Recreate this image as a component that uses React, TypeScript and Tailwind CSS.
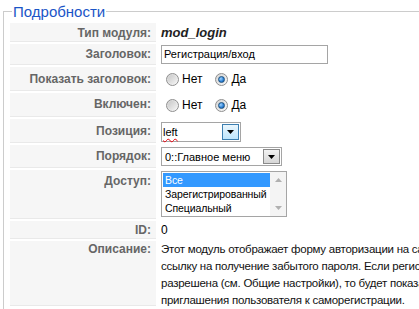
import React from "react";

function Radio({ checked }: { checked?: boolean }) {
  return (
    <span className="inline-flex h-[13px] w-[13px] items-center justify-center rounded-full border border-[#8f8f8f] bg-[linear-gradient(135deg,#d4d4d4,#f8f8f8)]">
      {checked ? (
        <span className="h-[7px] w-[7px] rounded-full border border-[#1c5180] bg-[radial-gradient(circle_at_35%_35%,#9fd3ff,#2a7fd4_60%,#0d4c91)]" />
      ) : (
        <span className="h-[9px] w-[9px] rounded-full bg-[linear-gradient(135deg,#c8c8c8,#f4f4f4)]" />
      )}
    </span>
  );
}

function Arrow() {
  return (
    <svg width="7" height="4" viewBox="0 0 7 4">
      <path d="M0 0h7L3.5 4z" fill="#000" />
    </svg>
  );
}

function Row({
  h,
  lpt,
  vpt,
  name,
  children,
}: {
  h: string;
  lpt: string;
  vpt: string;
  name: string;
  children: React.ReactNode;
}) {
  return (
    <tr>
      <td className="p-0 align-top">
        <div
          className={`${h} ${lpt} w-[146px] bg-[#f6f6f6] border-b border-[#e9e9e9] text-right pr-[5px] font-bold text-[#666] leading-[14px]`}
        >
          {name}
        </div>
      </td>
      <td className="p-0 align-top">
        <div className={`${h} ${vpt} pl-[4px] text-black leading-[14px]`}>{children}</div>
      </td>
    </tr>
  );
}

function RadioPair() {
  return (
    <div className="flex items-center pl-[5px]">
      <Radio />
      <span className="ml-[3px]">Нет</span>
      <span className="ml-[13px]">
        <Radio checked />
      </span>
      <span className="ml-[3px]">Да</span>
    </div>
  );
}

export default function App() {
  return (
    <div className="w-[419px] h-[309px] overflow-hidden bg-white text-[12px] font-['Liberation_Sans',Arial,sans-serif]">
      <fieldset className="ml-[3px] mt-[3px] w-[700px] border border-[#cccccc] pl-[6px] pr-2 pb-2 pt-[1px]">
        <legend className="ml-[2px] px-[1px] text-[15px] leading-[17px] text-[#1a55c7]">
          Подробности
        </legend>
        <table className="table-fixed border-separate border-spacing-x-[1px] border-spacing-y-[2px] -ml-[1px]">
          <tbody>
            <Row h="h-[19px]" lpt="pt-[3px]" vpt="pt-[3px]" name="Тип модуля:">
              <span className="font-bold italic text-[13px] text-[#222]">mod_login</span>
            </Row>
            <Row h="h-[21px]" lpt="pt-[3px]" vpt="pt-[1px]" name="Заголовок:">
              <div className="h-[19px] w-[167px] border border-[#a5a5a5] bg-white pl-[2px] text-[11px] leading-[17px] text-black">
                Регистрация/вход
              </div>
            </Row>
            <Row h="h-[24px]" lpt="pt-[5px]" vpt="pt-[5px]" name="Показать заголовок:">
              <RadioPair />
            </Row>
            <Row h="h-[24px]" lpt="pt-[4px]" vpt="pt-[5px]" name="Включен:">
              <RadioPair />
            </Row>
            <Row h="h-[24px]" lpt="pt-[5px]" vpt="pt-[3px]" name="Позиция:">
              <div className="flex h-[20px] w-[80px] items-center border border-[#a5a5a5] bg-white pr-[1px] text-[11px] text-black">
                <span className="flex-1 pl-[1px] underline decoration-wavy decoration-red-600 decoration-[1px] underline-offset-2">
                  left
                </span>
                <span className="flex h-[16px] w-[17px] items-center justify-center border border-[#3c7fb1] bg-[linear-gradient(#eaf6fd,#bee6fd)]">
                  <Arrow />
                </span>
              </div>
            </Row>
            <Row h="h-[23px]" lpt="pt-[4px]" vpt="pt-[2px]" name="Порядок:">
              <div className="flex h-[19px] w-[121px] items-center border border-[#a5a5a5] bg-white pr-[1px] text-[11px] text-black">
                <span className="flex-1 pl-[3px]">0::Главное меню</span>
                <span className="flex h-[15px] w-[17px] items-center justify-center border border-[#8a8a8a] bg-[linear-gradient(#f2f2f2,#d6d6d6)]">
                  <Arrow />
                </span>
              </div>
            </Row>
            <Row h="h-[49px]" lpt="pt-[4px]" vpt="pt-[1px]" name="Доступ:">
              <div className="flex h-[46px] w-[126px] border border-[#a5a5a5] bg-white text-[10.5px] leading-[14px] tracking-[-0.1px] text-black">
                <div className="flex-1 pt-[1px] pl-[1px]">
                  <div className="bg-[#3399ff] pl-[2px] text-white">Все</div>
                  <div className="pl-[2px]">Зарегистрированный</div>
                  <div className="pl-[2px]">Специальный</div>
                </div>
                <div className="flex w-[16px] flex-col items-center justify-between bg-[#f4f4f4] py-[6px]">
                  <svg width="7" height="4" viewBox="0 0 7 4">
                    <path d="M0 4h7L3.5 0z" fill="#b0b0b0" />
                  </svg>
                  <svg width="7" height="4" viewBox="0 0 7 4">
                    <path d="M0 0h7L3.5 4z" fill="#b0b0b0" />
                  </svg>
                </div>
              </div>
            </Row>
            <Row h="h-[18px]" lpt="pt-[2px]" vpt="pt-[2px]" name="ID:">
              0
            </Row>
            <Row h="h-[65px]" lpt="pt-[1px]" vpt="pt-[1px]" name="Описание:">
              <div className="whitespace-nowrap leading-[17px] -mt-[1px] text-[11.5px] tracking-[-0.25px] text-[#111]">
                <div>Этот модуль отображает форму авторизации на сайте и</div>
                <div>ссылку на получение забытого пароля. Если регистрация</div>
                <div>разрешена (см. Общие настройки), то будет показана ссылка</div>
                <div>приглашения пользователя к саморегистрации.</div>
              </div>
            </Row>
          </tbody>
        </table>
      </fieldset>
    </div>
  );
}
